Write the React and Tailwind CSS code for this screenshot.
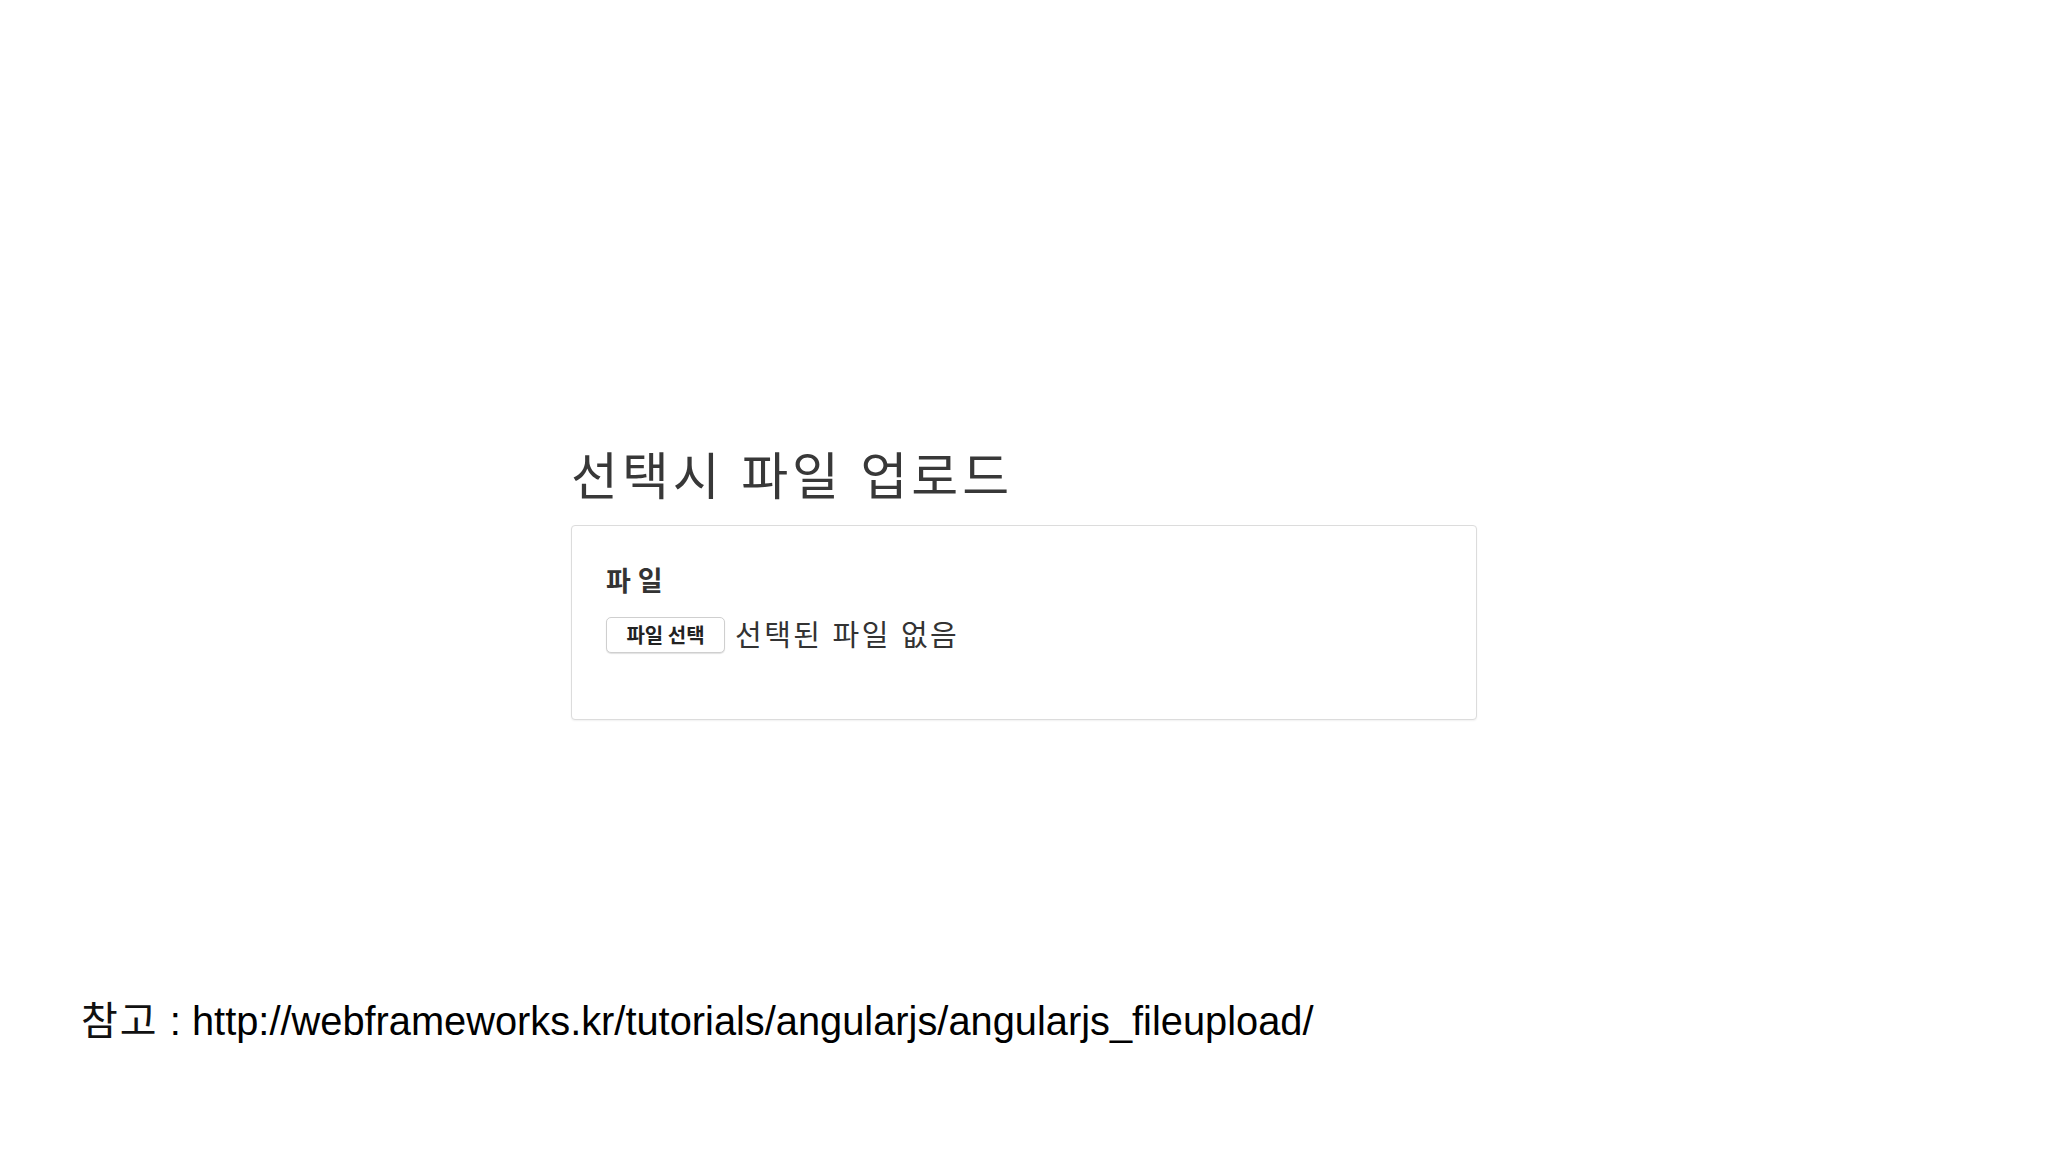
import React from "react";

const KR = "font-['Noto_Sans_CJK_KR','Noto_Sans',sans-serif]";

const FileField = () => {
  return (
    <div className="w-[906px] rounded-[4px] border border-[#dcdcdc] bg-white px-[34px] pt-[38px] pb-[66px] shadow-[0_1px_2px_rgba(0,0,0,0.06)]">
      <label className="block text-[27px] leading-[32px] font-bold tracking-[7px] text-[#333]">
        파일
      </label>
      <div className="mt-[21px] flex items-center gap-[10px]">
        <button className="flex h-[36px] w-[119px] items-center justify-center rounded-[5px] border border-[#cfcfcf] bg-white text-[20px] font-bold text-[#222] shadow-[0_1px_1px_rgba(0,0,0,0.12)]">
          파일 선택
        </button>
        <span className="-mt-[4px] text-[29px] leading-[34px] tracking-[2.5px] text-[#333] [word-spacing:1px]">
          선택된 파일 없음
        </span>
      </div>
    </div>
  );
};

export default function App() {
  return (
    <div className={`min-h-[1152px] w-[2048px] bg-white ${KR}`}>
      <main className="flex flex-col pl-[571px] pt-[443px]">
        <h1 className="text-[51px] leading-[60px] font-normal tracking-[4px] text-[#383838] [word-spacing:2px]">
          선택시 파일 업로드
        </h1>
        <div className="mt-[22px]">
          <FileField />
        </div>
      </main>
      <footer className="mt-[277px] pl-[81px] font-['Liberation_Sans','Noto_Sans_CJK_KR',sans-serif] text-[40px] leading-[48px] text-black">
        <span className="tracking-[2px] text-[#111]">참고</span> : <span className="text-[39.8px]">http://webframeworks.kr/tutorials/angularjs/angularjs_fileupload/</span>
      </footer>
    </div>
  );
}
